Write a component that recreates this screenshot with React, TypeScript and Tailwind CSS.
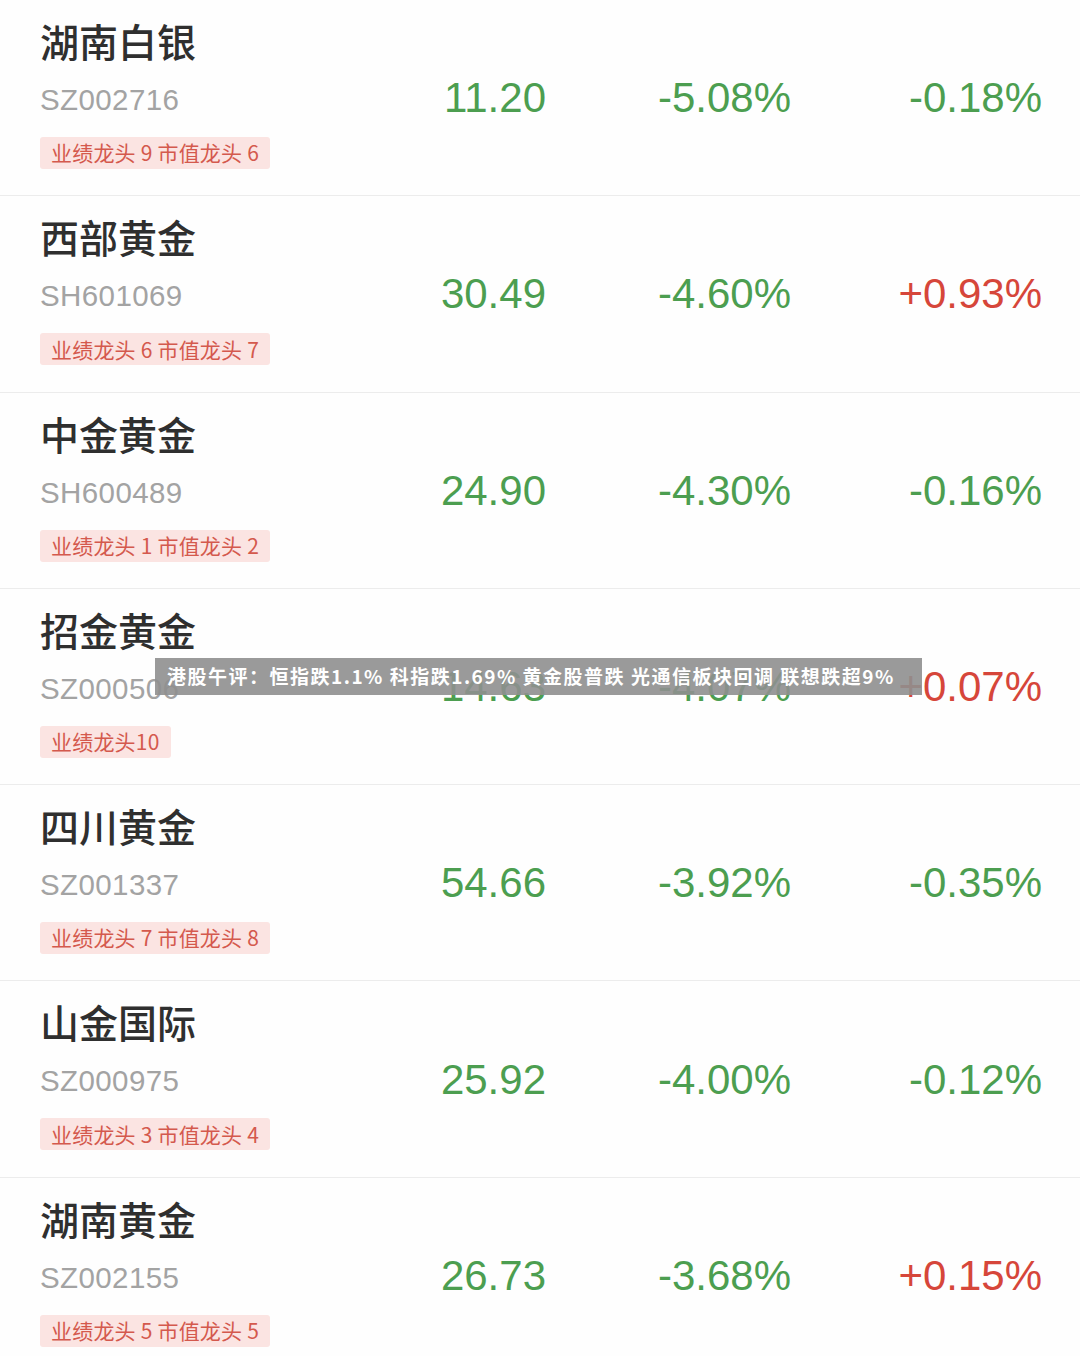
import React from 'react';

type Stock = {
    name: string;
    code: string;
    price: string;
    change: string;
    extra: string;
    tag: string;
};

const stocks: Stock[] = [
    { name: '湖南白银', code: 'SZ002716', price: '11.20', change: '-5.08%', extra: '-0.18%', tag: '业绩龙头 9 市值龙头 6' },
    { name: '西部黄金', code: 'SH601069', price: '30.49', change: '-4.60%', extra: '+0.93%', tag: '业绩龙头 6 市值龙头 7' },
    { name: '中金黄金', code: 'SH600489', price: '24.90', change: '-4.30%', extra: '-0.16%', tag: '业绩龙头 1 市值龙头 2' },
    { name: '招金黄金', code: 'SZ000506', price: '14.63', change: '-4.07%', extra: '+0.07%', tag: '业绩龙头10' },
    { name: '四川黄金', code: 'SZ001337', price: '54.66', change: '-3.92%', extra: '-0.35%', tag: '业绩龙头 7 市值龙头 8' },
    { name: '山金国际', code: 'SZ000975', price: '25.92', change: '-4.00%', extra: '-0.12%', tag: '业绩龙头 3 市值龙头 4' },
    { name: '湖南黄金', code: 'SZ002155', price: '26.73', change: '-3.68%', extra: '+0.15%', tag: '业绩龙头 5 市值龙头 5' },
];

const StockRow: React.FC<{ stock: Stock }> = ({ stock }) => {
    const up = stock.extra.startsWith('+');
    return (
        <div className="h-[196.3px] shrink-0 border-b border-[#ececec] flex items-center pr-[38px] font-['Liberation_Sans',Arial,'Noto_Sans_CJK_SC',sans-serif]">
            {/* left info */}
            <div className="flex-1 self-start pl-[40px] pt-[17px] flex flex-col items-start">
                <div className="text-[39px] leading-[46px] text-[#2f2f2f] font-medium font-['Noto_Sans_CJK_SC','Noto_Sans',sans-serif]">
                    {stock.name}
                </div>
                <div className="mt-[20px] text-[29.5px] leading-[34px] text-[#a3a3a3] tracking-[0.4px]">
                    {stock.code}
                </div>
                <div className="mt-[20px] h-[32px] px-[11px] flex items-center rounded-[3px] bg-[#fbe4e2] text-[21px] tracking-[0.2px] text-[#d4594d] font-['Noto_Sans_CJK_SC','Noto_Sans',sans-serif]">
                    {stock.tag}
                </div>
            </div>

            {/* numbers */}
            <div className="w-[200px] text-right text-[42px] text-[#4c9e50]">
                {stock.price}
            </div>
            <div className="w-[245px] text-right text-[42px] text-[#4c9e50]">
                {stock.change}
            </div>
            <div className={`w-[251px] text-right text-[42px] ${up ? 'text-[#d6463a]' : 'text-[#4c9e50]'}`}>
                {stock.extra}
            </div>
        </div>
    );
};

export default function App() {
    return (
        <div className="relative w-[1080px] h-[1356px] overflow-hidden bg-[#fefefe]">
            <div className="flex flex-col">
                {stocks.map(s => (
                    <StockRow key={s.code} stock={s} />
                ))}
            </div>

            {/* headline overlay */}
            <div className="absolute left-[155px] top-[658px] w-[767px] h-[37px] bg-[#8f8f8f]/90 flex items-center pl-[12px] text-white text-[19px] tracking-[1.5px] font-bold whitespace-nowrap font-['Noto_Sans_CJK_SC','Noto_Sans',sans-serif]">
                港股午评：恒指跌1.1% 科指跌1.69% 黄金股普跌 光通信板块回调 联想跌超9%
            </div>
        </div>
    );
}
